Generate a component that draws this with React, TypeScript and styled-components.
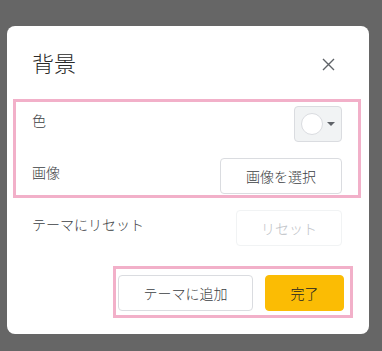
import React from 'react';
import styled, { createGlobalStyle } from 'styled-components';

const GlobalStyle = createGlobalStyle`
  html, body {
    margin: 0;
    padding: 0;
    background: #666666;
  }
  body {
    font-family: 'Noto Sans CJK JP', 'Noto Sans', sans-serif;
  }
`;

const Backdrop = styled.div`
  min-height: 351px;
  padding: 26px 0 0 7px;
  box-sizing: border-box;
`;

const Dialog = styled.div`
  width: 362px;
  background: #ffffff;
  border-radius: 8px;
  padding: 22px 27px 16px 25px;
  box-sizing: border-box;
  display: flex;
  flex-direction: column;
`;

const Header = styled.div`
  display: flex;
  align-items: center;
  justify-content: space-between;
  margin-bottom: 23px;
`;

const Title = styled.h2`
  margin: 0;
  font-size: 22px;
  line-height: 28px;
  font-weight: 300;
  color: #2a2a2a;
`;

const CloseButton = styled.button`
  width: 24px;
  height: 24px;
  margin: 4px 2px 0 0;
  padding: 0;
  border: none;
  background: transparent;
  display: flex;
  align-items: center;
  justify-content: center;
  cursor: pointer;
`;

const Highlight = styled.div`
  border: 3px solid #f2b0c9;
  box-sizing: border-box;
`;

const SettingsGroup = styled(Highlight)`
  margin: 0 -19px;
  padding: 4px 16px 1px;
  display: flex;
  flex-direction: column;
  gap: 16px;
`;

const Row = styled.div<{ $spaced?: boolean }>`
  display: flex;
  align-items: flex-start;
  justify-content: space-between;
  margin-top: ${(p) => (p.$spaced ? '12px' : '0')};
`;

const Label = styled.span`
  padding-top: 4px;
  font-size: 14px;
  line-height: 20px;
  font-weight: 300;
  color: #3c4043;
`;

const Button = styled.button<{ $width: number }>`
  width: ${(p) => p.$width}px;
  height: 36px;
  border-radius: 4px;
  border: 1px solid #dadce0;
  background: #ffffff;
  color: #3c4043;
  font-family: inherit;
  font-size: 14px;
  font-weight: 300;
  padding: 0;
  cursor: pointer;

  &:disabled {
    border-color: #f1f3f4;
    color: #bdc1c6;
    cursor: default;
  }
`;

const PrimaryButton = styled(Button)`
  background: #fbbc04;
  border-color: #fbbc04;
  color: #202124;
`;

const ColorButton = styled.button`
  width: 48px;
  height: 36px;
  border-radius: 4px;
  border: 1px solid #dadce0;
  background: #f1f3f4;
  padding: 0 0 0 6px;
  display: flex;
  align-items: center;
  gap: 4px;
  box-sizing: border-box;
  cursor: pointer;
`;

const Swatch = styled.span`
  width: 22px;
  height: 22px;
  border-radius: 50%;
  background: #ffffff;
  border: 1px solid #dadce0;
  box-sizing: border-box;
`;

const Caret = styled.span`
  width: 0;
  height: 0;
  border-left: 4px solid transparent;
  border-right: 4px solid transparent;
  border-top: 4px solid #5f6368;
`;

const Footer = styled(Highlight)`
  align-self: flex-end;
  margin: 20px -11px 0 0;
  padding: 6px 6px 4px 2px;
  display: flex;
  gap: 12px;
`;

export default function App() {
  return (
    <>
      <GlobalStyle />
      <Backdrop>
        <Dialog>
          <Header>
            <Title>背景</Title>
            <CloseButton aria-label="閉じる">
              <svg width="13" height="13" viewBox="0 0 13 13">
                <path d="M1 1L12 12M12 1L1 12" stroke="#5f6368" strokeWidth="1.4" fill="none" />
              </svg>
            </CloseButton>
          </Header>
          <SettingsGroup>
            <Row>
              <Label>色</Label>
              <ColorButton aria-label="色を選択">
                <Swatch />
                <Caret />
              </ColorButton>
            </Row>
            <Row>
              <Label>画像</Label>
              <Button $width={122}>画像を選択</Button>
            </Row>
          </SettingsGroup>
          <Row $spaced>
            <Label>テーマにリセット</Label>
            <Button $width={106} disabled>
              リセット
            </Button>
          </Row>
          <Footer>
            <Button $width={135}>テーマに追加</Button>
            <PrimaryButton $width={79}>完了</PrimaryButton>
          </Footer>
        </Dialog>
      </Backdrop>
    </>
  );
}
